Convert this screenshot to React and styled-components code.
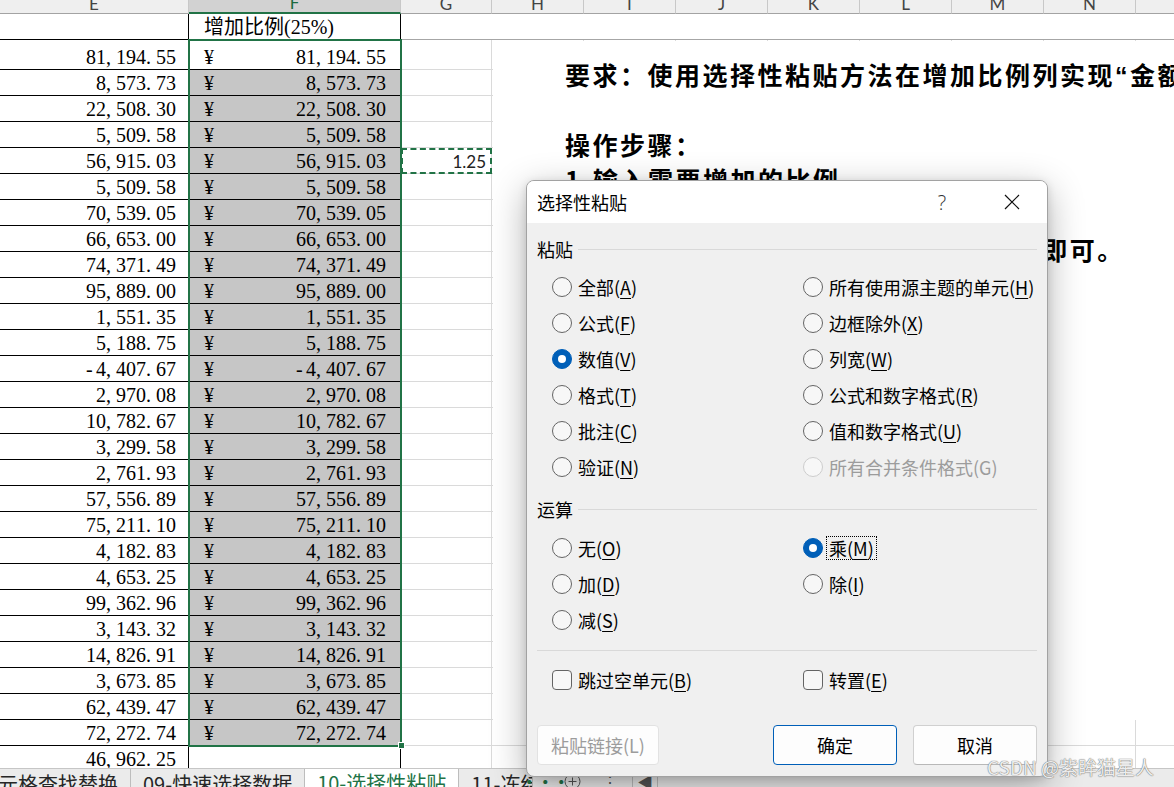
import styled, { createGlobalStyle } from "styled-components";

const GlobalStyle = createGlobalStyle`
  html, body { margin: 0; padding: 0; background: #fff; }
  body { font-family: "Noto Sans CJK SC", "Liberation Sans", sans-serif; }
  * { box-sizing: border-box; }
`;

const GREEN = "#217346";

const COLS = [
  { name: "E", width: 189 },
  { name: "F", width: 212 },
  { name: "G", width: 91 },
  { name: "H", width: 92 },
  { name: "I", width: 92 },
  { name: "J", width: 92 },
  { name: "K", width: 92 },
  { name: "L", width: 92 },
  { name: "M", width: 92 },
  { name: "N", width: 92 },
  { name: "O", width: 120 },
];

const AMOUNTS = [
  "81,194.55", "8,573.73", "22,508.30", "5,509.58", "56,915.03", "5,509.58",
  "70,539.05", "66,653.00", "74,371.49", "95,889.00", "1,551.35", "5,188.75",
  "-4,407.67", "2,970.08", "10,782.67", "3,299.58", "2,761.93", "57,556.89",
  "75,211.10", "4,182.83", "4,653.25", "99,362.96", "3,143.32", "14,826.91",
  "3,673.85", "62,439.47", "72,272.74",
];

const PASTE_OPTS = [
  { label: "全部", key: "A" },
  { label: "所有使用源主题的单元", key: "H" },
  { label: "公式", key: "F" },
  { label: "边框除外", key: "X" },
  { label: "数值", key: "V", checked: true },
  { label: "列宽", key: "W" },
  { label: "格式", key: "T" },
  { label: "公式和数字格式", key: "R" },
  { label: "批注", key: "C" },
  { label: "值和数字格式", key: "U" },
  { label: "验证", key: "N" },
  { label: "所有合并条件格式", key: "G", disabled: true },
];

const OP_OPTS = [
  { label: "无", key: "O" },
  { label: "乘", key: "M", checked: true, focused: true },
  { label: "加", key: "D" },
  { label: "除", key: "I" },
  { label: "减", key: "S" },
];

const Page = styled.div`
  position: relative;
  width: 1174px;
  height: 787px;
  overflow: hidden;
  display: flex;
  flex-direction: column;
  background: #fff;
`;

const Sheet = styled.div`
  flex: 1;
  overflow: hidden;
  display: flex;
  flex-direction: column;
`;

const ColHeader = styled.div`
  display: flex;
  flex-shrink: 0;
  height: 26px;
  margin-top: -12px;
`;

const HeaderCell = styled.div`
  flex-shrink: 0;
  width: ${({ $w }) => $w}px;
  display: flex;
  justify-content: center;
  align-items: flex-end;
  background: ${({ $active }) => ($active ? "#d2d2d2" : "#efefef")};
  border-right: 1px solid #c8c8c8;
  border-bottom: ${({ $active }) => ($active ? `2px solid ${GREEN}` : "1px solid #a3a3a3")};
  color: ${({ $active }) => ($active ? "#1b6b40" : "#444")};
  font-family: Lato, "Liberation Sans", sans-serif;
  font-size: 17px;
  line-height: 18px;
`;

const Row = styled.div`
  display: flex;
  flex-shrink: 0;
  height: ${({ $h }) => $h}px;
`;

const ECell = styled.div`
  flex-shrink: 0;
  width: 189px;
  display: flex;
  justify-content: flex-end;
  align-items: flex-end;
  padding: 0 12px 0 0;
  border-right: 1px solid #000;
  border-bottom: 1px solid #000;
`;

const FCell = styled.div`
  flex-shrink: 0;
  width: 212px;
  display: flex;
  justify-content: space-between;
  align-items: flex-end;
  padding: 0 14px 0 15px;
  background: ${({ $shaded }) => ($shaded ? "#c6c6c6" : "#fff")};
  border-right: 1px solid #000;
  border-bottom: ${({ $open }) => ($open ? "none" : "1px solid #000")};
`;

const GridCell = styled.div`
  flex-shrink: 0;
  width: ${({ $w }) => $w}px;
  display: flex;
  justify-content: flex-end;
  align-items: center;
  padding: 2px 5px 0 0;
  border-right: ${({ $plain }) => ($plain ? "none" : "1px solid #dadada")};
  border-bottom: 1px solid ${({ $plain }) => ($plain ? "#a6a6a6" : "#dadada")};
  outline: ${({ $marked }) => ($marked ? `2px dashed ${GREEN}` : "none")};
  outline-offset: -2px;
  font-family: Lato, "Liberation Sans", sans-serif;
  font-size: 17px;
  color: #222;
`;

const NumText = styled.span`
  font-family: "Liberation Serif", "Noto Sans CJK SC", serif;
  font-size: 20px;
  line-height: 24px;
  white-space: nowrap;
  color: #000;
`;

const Ch = styled.span`
  display: inline-block;
  width: 10px;
`;

const Selection = styled.div`
  position: absolute;
  left: 188px;
  top: 39px;
  width: 214px;
  height: 708px;
  border: 2px solid ${GREEN};
  pointer-events: none;
`;

const FillHandle = styled.div`
  position: absolute;
  right: -5px;
  bottom: -4px;
  width: 7px;
  height: 7px;
  background: ${GREEN};
  border: 1px solid #fff;
`;

const TextBox = styled.div`
  position: absolute;
  left: 493px;
  top: 41px;
  width: 900px;
  height: 679px;
  background: #fff;
  padding: 16px 0 0 72px;
  font-family: "Noto Sans CJK SC", sans-serif;
  font-weight: 700;
  font-size: 25px;
  letter-spacing: 2.5px;
  line-height: 35px;
  white-space: nowrap;
  color: #000;
`;

const Line = styled.div`
  height: 35px;
`;

const Latin = styled.span`
  font-family: "Liberation Sans", sans-serif;
`;

const TabBar = styled.div`
  position: relative;
  flex-shrink: 0;
  height: 19px;
  overflow: hidden;
  display: flex;
  align-items: flex-start;
  background: #ebebeb;
  border-top: 1px solid #c6c6c6;
`;

const Tab = styled.div`
  flex-shrink: 0;
  padding: 0 12px;
  margin-top: ${({ $active }) => ($active ? "-1px" : "0")};
  max-width: ${({ $max }) => ($max ? `${$max}px` : "none")};
  overflow: hidden;
  white-space: nowrap;
  font-size: 20px;
  line-height: 30px;
  color: ${({ $active }) => ($active ? GREEN : "#262626")};
  background: ${({ $active }) => ($active ? "#fff" : "transparent")};
  border-right: 1px solid #bdbdbd;
  &:first-child {
    margin-left: -14px;
  }
`;

const TabTool = styled.div`
  flex-shrink: 0;
  width: ${({ $w }) => $w}px;
  display: flex;
  justify-content: center;
  padding-top: 4px;
  color: ${({ $green }) => ($green ? GREEN : "#555")};
  font-size: 16px;
  font-weight: ${({ $green }) => ($green ? 700 : 400)};
  line-height: 16px;
  border-right: ${({ $sep }) => ($sep ? "1px solid #bdbdbd" : "none")};
`;

const Dialog = styled.div`
  position: absolute;
  left: 526px;
  top: 180px;
  width: 522px;
  height: 597px;
  display: flex;
  flex-direction: column;
  background: #f0f0f0;
  border: 1px solid #a2a2a2;
  border-radius: 8px;
  overflow: hidden;
  box-shadow: 0 10px 36px rgba(0, 0, 0, 0.3), 0 2px 8px rgba(0, 0, 0, 0.12);
  font-family: "Noto Sans CJK SC", sans-serif;
  font-size: 18px;
  color: #000;
`;

const TitleBar = styled.div`
  height: 42px;
  flex-shrink: 0;
  display: flex;
  align-items: center;
  padding-left: 10px;
  background: #fff;
`;

const Title = styled.div`
  flex: 1;
  font-size: 18px;
  line-height: 24px;
`;

const HelpBtn = styled.div`
  width: 46px;
  margin-right: 12px;
  text-align: center;
  font-family: "Open Sans", "Liberation Sans", sans-serif;
  font-weight: 300;
  font-size: 20px;
  color: #333;
`;

const CloseBtn = styled.div`
  width: 70px;
  display: flex;
  justify-content: center;
`;

const Body = styled.div`
  flex: 1;
  display: flex;
  flex-direction: column;
  padding: 14px 10px 0 10px;
`;

const GroupHeader = styled.div`
  display: flex;
  align-items: center;
  height: 24px;
  margin-top: ${({ $mt }) => $mt}px;
  line-height: 24px;
  &::after {
    content: "";
    flex: 1;
    height: 1px;
    margin-left: 5px;
    background: #d9d9d9;
  }
`;

const OptionGrid = styled.div`
  display: grid;
  grid-template-columns: 251px 1fr;
  grid-auto-rows: 36px;
  padding-left: 15px;
  margin-top: ${({ $mt }) => $mt}px;
`;

const Option = styled.div`
  display: flex;
  align-items: center;
  gap: 3px;
  color: ${({ $disabled }) => ($disabled ? "#9c9c9c" : "#000")};
`;

const RadioCircle = styled.span`
  flex-shrink: 0;
  width: 20px;
  height: 20px;
  border-radius: 50%;
  display: flex;
  align-items: center;
  justify-content: center;
  border: 1px solid
    ${({ $checked, $disabled }) => ($checked ? "#005fb8" : $disabled ? "#cdcdcd" : "#646464")};
  background: ${({ $checked }) => ($checked ? "#005fb8" : "#f7f7f7")};
  &::after {
    content: "";
    display: ${({ $checked }) => ($checked ? "block" : "none")};
    width: 8px;
    height: 8px;
    border-radius: 50%;
    background: #fff;
  }
`;

const CheckBox = styled.span`
  flex-shrink: 0;
  width: 20px;
  height: 20px;
  border-radius: 4px;
  border: 1px solid #646464;
  background: #f7f7f7;
`;

const OptLabel = styled.span`
  padding: 0 2px;
  line-height: 22px;
  border: 1px dotted ${({ $focused }) => ($focused ? "#000" : "transparent")};
  white-space: nowrap;
`;

const Key = styled.span`
  text-decoration: ${({ $off }) => ($off ? "none" : "underline")};
  text-decoration-thickness: 1px;
  text-underline-offset: 3px;
`;

const Divider = styled.div`
  height: 1px;
  margin-top: 12px;
  background: #d9d9d9;
`;

const ButtonRow = styled.div`
  display: flex;
  gap: 16px;
  margin-top: 27px;
`;

const Button = styled.div`
  width: ${({ $w }) => $w}px;
  height: 40px;
  margin-right: ${({ $push }) => ($push ? "auto" : "0")};
  display: flex;
  align-items: center;
  justify-content: center;
  border-radius: 4px;
  background: #fdfdfd;
  border: 1px solid ${({ $primary, $disabled }) => ($primary ? "#005fb8" : $disabled ? "#e2e2e2" : "#d0d0d0")};
  border-bottom-color: ${({ $primary, $disabled }) => ($primary ? "#005fb8" : $disabled ? "#e2e2e2" : "#b8b8b8")};
  color: ${({ $disabled }) => ($disabled ? "#9c9c9c" : "#000")};
  font-size: 18px;
`;

const Watermark = styled.div`
  position: absolute;
  left: 987px;
  top: 753px;
  font-family: "Noto Sans CJK SC", sans-serif;
  font-size: 19px;
  color: rgba(250, 250, 250, 0.92);
  text-shadow: 0 0 1px #6f6f6f, 0 0 1px #6f6f6f;
  white-space: nowrap;
`;

function Num({ value }) {
  return (
    <NumText>
      {value.split("").map((c, i) => (
        <Ch key={i}>{c}</Ch>
      ))}
    </NumText>
  );
}

function RestCells({ marked, plain }) {
  return COLS.slice(2).map((col, i) => (
    <GridCell key={col.name} $w={col.width} $plain={plain} $marked={marked && i === 0}>
      {marked && i === 0 ? "1.25" : null}
    </GridCell>
  ));
}

function RadioOption({ opt }) {
  return (
    <Option $disabled={opt.disabled}>
      <RadioCircle $checked={opt.checked} $disabled={opt.disabled} />
      <OptLabel $focused={opt.focused}>
        {opt.label}(<Key $off={opt.disabled}>{opt.key}</Key>)
      </OptLabel>
    </Option>
  );
}

function CheckOption({ label, k }) {
  return (
    <Option>
      <CheckBox />
      <OptLabel>
        {label}(<Key>{k}</Key>)
      </OptLabel>
    </Option>
  );
}

function CloseIcon() {
  return (
    <svg width="16" height="16" viewBox="0 0 16 16">
      <path d="M1 1 L15 15 M15 1 L1 15" stroke="#111" strokeWidth="1.2" fill="none" />
    </svg>
  );
}

function PlusCircle() {
  return (
    <svg width="17" height="17" viewBox="0 0 17 17">
      <circle cx="8.5" cy="8.5" r="7.5" stroke="#555" fill="none" />
      <path d="M8.5 4.5 V12.5 M4.5 8.5 H12.5" stroke="#555" />
    </svg>
  );
}

export default function App() {
  return (
    <Page>
      <GlobalStyle />
      <Sheet>
        <ColHeader>
          {COLS.map((col) => (
            <HeaderCell key={col.name} $w={col.width} $active={col.name === "F"}>
              {col.name}
            </HeaderCell>
          ))}
        </ColHeader>

        <Row $h={26}>
          <ECell />
          <FCell>
            <NumText>增加比例(25%)</NumText>
          </FCell>
          <RestCells plain />
        </Row>

        {AMOUNTS.map((v, i) => (
          <Row key={i} $h={i === 0 ? 30 : 26}>
            <ECell>
              <Num value={v} />
            </ECell>
            <FCell $shaded={i > 0}>
              <NumText>¥</NumText>
              <Num value={v} />
            </FCell>
            <RestCells marked={i === 4} />
          </Row>
        ))}

        <Row $h={26}>
          <ECell>
            <Num value="46,962.25" />
          </ECell>
          <FCell $open />
          <RestCells />
        </Row>
      </Sheet>

      <TabBar>
        <Tab>元格查找替换</Tab>
        <Tab>09-快速选择数据</Tab>
        <Tab $active>10-选择性粘贴</Tab>
        <Tab $max={74}>11-冻结窗格</Tab>
        <TabTool $w={24} $green>···</TabTool>
        <TabTool $w={30}>
          <PlusCircle />
        </TabTool>
        <TabTool $w={46} $sep>⋮</TabTool>
        <TabTool $w={25} $sep>◀</TabTool>
      </TabBar>

      <Selection>
        <FillHandle />
      </Selection>

      <TextBox>
        <Line>
          要求：使用选择性粘贴方法在增加比例列实现<Latin>“</Latin>金额增加25%<Latin>”</Latin>
        </Line>
        <Line />
        <Line>操作步骤：</Line>
        <Line>1.输入需要增加的比例</Line>
        <Line>2.复制该单元格，选中数据区域</Line>
        <Line>
          3.右键选择性粘贴<Latin>,</Latin>勾选数值与乘后确定即可。
        </Line>
      </TextBox>

      <Dialog>
        <TitleBar>
          <Title>选择性粘贴</Title>
          <HelpBtn>?</HelpBtn>
          <CloseBtn>
            <CloseIcon />
          </CloseBtn>
        </TitleBar>
        <Body>
          <GroupHeader $mt={0}>粘贴</GroupHeader>
          <OptionGrid $mt={8}>
            {PASTE_OPTS.map((opt) => (
              <RadioOption key={opt.key} opt={opt} />
            ))}
          </OptionGrid>
          <GroupHeader $mt={12}>运算</GroupHeader>
          <OptionGrid $mt={9}>
            {OP_OPTS.map((opt) => (
              <RadioOption key={opt.key} opt={opt} />
            ))}
          </OptionGrid>
          <Divider />
          <OptionGrid $mt={11}>
            <CheckOption label="跳过空单元" k="B" />
            <CheckOption label="转置" k="E" />
          </OptionGrid>
          <ButtonRow>
            <Button $w={122} $disabled $push>
              粘贴链接(L)
            </Button>
            <Button $w={124} $primary>
              确定
            </Button>
            <Button $w={124}>取消</Button>
          </ButtonRow>
        </Body>
      </Dialog>

      <Watermark>CSDN @紫眸猫星人</Watermark>
    </Page>
  );
}
